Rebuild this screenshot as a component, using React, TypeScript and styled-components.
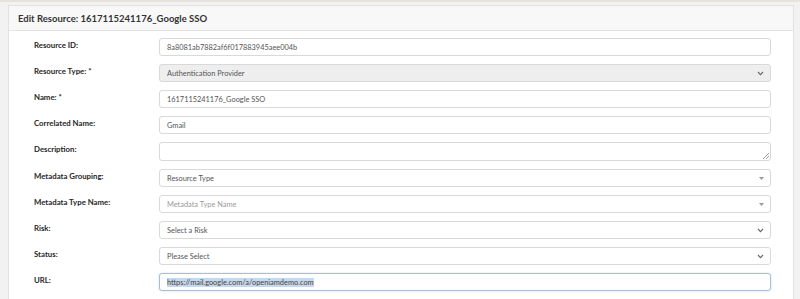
import React, { ReactElement } from 'react';
import styled, { createGlobalStyle } from 'styled-components';

type FieldKind = 'text' | 'disabled' | 'textarea' | 'caret' | 'chevron' | 'focus';

interface Field {
  label: string;
  value: string;
  kind: FieldKind;
  placeholder?: boolean;
}

const FIELDS: Field[] = [
  { label: 'Resource ID:', value: '8a8081ab7882af6f017883945aee004b', kind: 'text' },
  { label: 'Resource Type: *', value: 'Authentication Provider', kind: 'disabled' },
  { label: 'Name: *', value: '1617115241176_Google SSO', kind: 'text' },
  { label: 'Correlated Name:', value: 'Gmail', kind: 'text' },
  { label: 'Description:', value: '', kind: 'textarea' },
  { label: 'Metadata Grouping:', value: 'Resource Type', kind: 'caret' },
  { label: 'Metadata Type Name:', value: 'Metadata Type Name', kind: 'caret', placeholder: true },
  { label: 'Risk:', value: 'Select a Risk', kind: 'chevron' },
  { label: 'Status:', value: 'Please Select', kind: 'chevron' },
  { label: 'URL:', value: 'https://mail.google.com/a/openiamdemo.com', kind: 'focus' },
];

const GlobalStyle = createGlobalStyle`
  html, body {
    margin: 0;
    background: #f2f2f2;
    font-family: 'Lato', 'Open Sans', sans-serif;
  }
  body {
    border-top: 2px solid #e6e2dc;
  }
`;

const Chevron = (): ReactElement => (
  <svg width="7" height="5" viewBox="0 0 7 5" fill="none">
    <path d="M1 1 L3.5 3.6 L6 1" stroke="#666" strokeWidth="1.1" />
  </svg>
);

const Caret = (): ReactElement => (
  <svg width="5" height="3" viewBox="0 0 5 3">
    <path d="M0 0 H5 L2.5 3 Z" fill="#999" />
  </svg>
);

const Grip = (): ReactElement => (
  <svg width="6" height="6" viewBox="0 0 6 6" fill="none">
    <path d="M6 0 L0 6 M6 3 L3 6" stroke="#888" strokeWidth="0.8" />
  </svg>
);

const App = (): ReactElement => (
  <>
    <GlobalStyle />
    <Page>
      <Panel>
        <PanelHeader>Edit Resource: 1617115241176_Google SSO</PanelHeader>
        <PanelBody>
          {FIELDS.map((f) => (
            <Row key={f.label}>
              <Label>{f.label}</Label>
              <Control kind={f.kind}>
                <Value placeholder={f.placeholder}>
                  {f.kind === 'focus' ? <Selected>{f.value}</Selected> : f.value}
                </Value>
                {(f.kind === 'chevron' || f.kind === 'disabled') && <Chevron />}
                {f.kind === 'caret' && <Caret />}
                {f.kind === 'textarea' && (
                  <GripCorner>
                    <Grip />
                  </GripCorner>
                )}
              </Control>
            </Row>
          ))}
        </PanelBody>
      </Panel>
    </Page>
  </>
);

const Page = styled.div`
  padding: 3px 6px 0 8px;
`;

const Panel = styled.div`
  background: #ffffff;
  border: 1px solid #e2e2e2;
  border-bottom: none;
  height: 400px;
`;

const PanelHeader = styled.div`
  height: 24px;
  display: flex;
  align-items: center;
  padding: 0 9px;
  background: #f8f8f8;
  border-bottom: 1px solid #e4e4e4;
  font-size: 9.5px;
  font-weight: 700;
  color: #333;
`;

const PanelBody = styled.div`
  padding: 7px 22px 0 25px;
`;

const Row = styled.div`
  display: grid;
  grid-template-columns: 125px 1fr;
  margin-bottom: 8px;
`;

const Label = styled.div`
  font-size: 7.8px;
  font-weight: 700;
  color: #262626;
  padding-top: 2px;
`;

const Control = styled.div<{ kind: FieldKind }>`
  position: relative;
  height: ${({ kind }) => (kind === 'textarea' ? '19px' : '18px')};
  box-sizing: border-box;
  display: flex;
  align-items: center;
  justify-content: space-between;
  padding: 0 6px 0 7px;
  border: 1px solid ${({ kind }) => (kind === 'focus' ? '#a6bfd8' : '#d9d9d9')};
  border-radius: 3px;
  background: ${({ kind }) => (kind === 'disabled' ? '#eeeeee' : '#ffffff')};
  box-shadow: ${({ kind }) => (kind === 'focus' ? '0 0 2px rgba(102, 150, 200, 0.35)' : 'none')};
`;

const Value = styled.span<{ placeholder?: boolean }>`
  font-size: 7.4px;
  color: ${({ placeholder }) => (placeholder ? '#9a9a9a' : '#555')};
  white-space: nowrap;
`;

const Selected = styled.span`
  background: #c8d8ea;
  color: #444;
`;

const GripCorner = styled.span`
  position: absolute;
  right: 1px;
  bottom: 1px;
  display: flex;
`;

export default App;
